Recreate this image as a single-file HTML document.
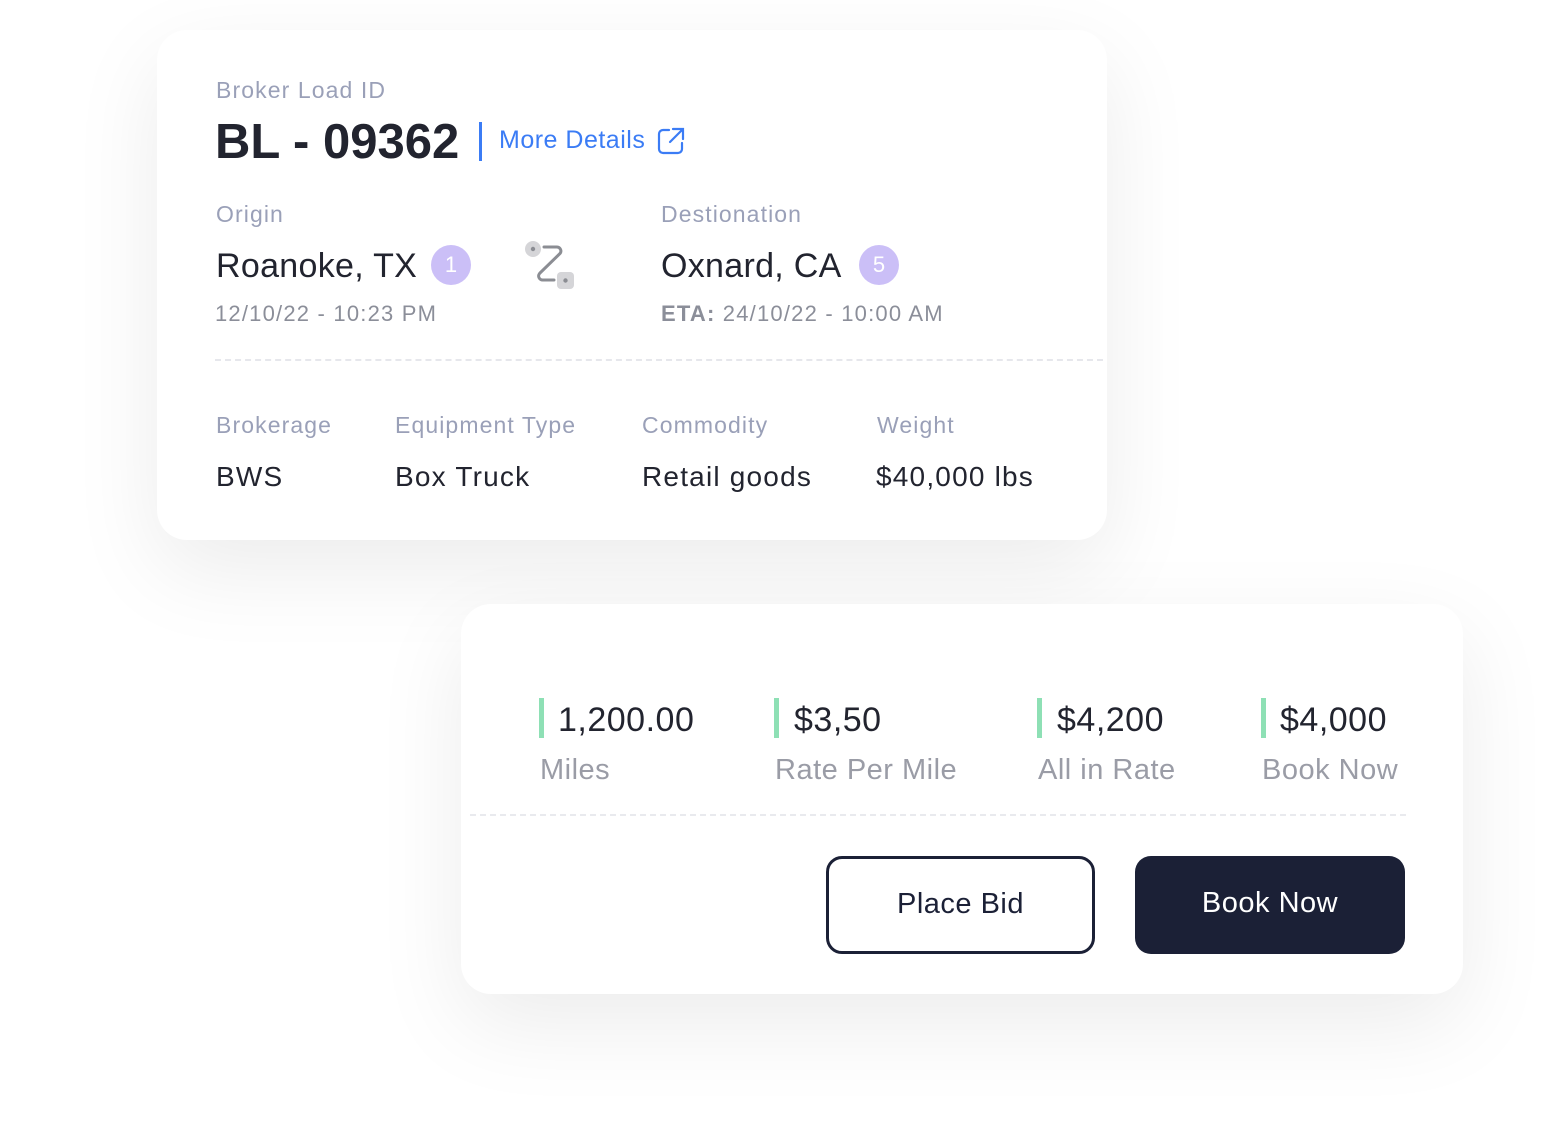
<!DOCTYPE html>
<html><head><style>
*{margin:0;padding:0;box-sizing:border-box}
body{width:1561px;height:1144px;background:#fff;position:relative;overflow:hidden;font-family:"Liberation Sans",sans-serif;color:#22242f}
.card{position:absolute;background:#fff;border-radius:30px;box-shadow:0 30px 90px rgba(0,0,0,0.08)}
.a{position:absolute;white-space:nowrap}
.lbl{color:#9aa0b8;font-size:23px;letter-spacing:1.1px}
.sub{color:#8b8e99;font-size:22px;letter-spacing:1.2px}
.val{font-size:28px;color:#22242f;letter-spacing:1.2px}
.badge{position:absolute;width:40px;height:40px;border-radius:50%;background:#cbbff7;color:#fff;font-size:22px;text-align:center;line-height:40px}
.bar{position:absolute;width:5px;height:40px;background:#8ee0b5}
.big{font-size:34px;color:#22242f;letter-spacing:0.5px}
.gl{font-size:29px;color:#9a9ca6;letter-spacing:0.5px}
</style></head><body>
<div class="card" style="left:157px;top:30px;width:950px;height:510px"></div>
<div class="card" style="left:461px;top:604px;width:1002px;height:390px"></div>

<div class="a lbl" style="left:216px;top:77px">Broker Load ID</div>
<div class="a" style="left:215px;top:114px;font-size:49px;font-weight:bold;color:#22242f">BL - 09362</div>
<div class="a" style="left:479px;top:122px;width:3px;height:39px;background:#3b7cf5"></div>
<div class="a" style="left:499px;top:126px;font-size:25px;color:#3b7cf5;letter-spacing:0.5px">More Details</div>
<svg class="a" style="left:656px;top:126px" width="30" height="30" viewBox="0 0 30 30" fill="none" stroke="#3b7cf5" stroke-width="2.2" stroke-linecap="round"><path d="M13 4H7a4 4 0 0 0-4 4v15a4 4 0 0 0 4 4h15a4 4 0 0 0 4-4v-6"/><path d="M17 3h10v10M27 3L14 16"/></svg>

<div class="a lbl" style="left:216px;top:201px">Origin</div>
<div class="a" style="left:216px;top:247px;font-size:34px;letter-spacing:0.3px">Roanoke, TX</div>
<div class="badge" style="left:431px;top:245px">1</div>
<div class="a sub" style="left:215px;top:301px">12/10/22 - 10:23 PM</div>
<svg class="a" style="left:524px;top:240px" width="52" height="52" viewBox="0 0 52 52"><circle cx="9" cy="9" r="8" fill="#d5d5d8"/><circle cx="9" cy="9" r="2.2" fill="#8b8d93"/><rect x="33" y="32" width="17" height="17" rx="4" fill="#d5d5d8"/><circle cx="41.5" cy="40.5" r="2.2" fill="#8b8d93"/><path d="M20 7h13a4 4 0 0 1 3 6.5L16 33a4 4 0 0 0 3 7h11" fill="none" stroke="#8b8d93" stroke-width="3" stroke-linecap="round"/></svg>

<div class="a lbl" style="left:661px;top:201px">Destionation</div>
<div class="a" style="left:661px;top:247px;font-size:34px;letter-spacing:0.3px">Oxnard, CA</div>
<div class="badge" style="left:859px;top:245px">5</div>
<div class="a sub" style="left:661px;top:301px"><b style="font-weight:bold">ETA:</b> 24/10/22 - 10:00 AM</div>

<div class="a" style="left:215px;top:359px;width:888px;border-top:2px dashed #e6e7ec"></div>

<div class="a lbl" style="left:216px;top:412px">Brokerage</div>
<div class="a lbl" style="left:395px;top:412px">Equipment Type</div>
<div class="a lbl" style="left:642px;top:412px">Commodity</div>
<div class="a lbl" style="left:877px;top:412px">Weight</div>
<div class="a val" style="left:216px;top:461px">BWS</div>
<div class="a val" style="left:395px;top:461px">Box Truck</div>
<div class="a val" style="left:642px;top:461px">Retail goods</div>
<div class="a val" style="left:876px;top:461px">$40,000 lbs</div>

<div class="bar" style="left:539px;top:698px"></div>
<div class="a big" style="left:558px;top:701px">1,200.00</div>
<div class="a gl" style="left:540px;top:754px">Miles</div>
<div class="bar" style="left:774px;top:698px"></div>
<div class="a big" style="left:794px;top:701px">$3,50</div>
<div class="a gl" style="left:775px;top:754px">Rate Per Mile</div>
<div class="bar" style="left:1037px;top:698px"></div>
<div class="a big" style="left:1057px;top:701px">$4,200</div>
<div class="a gl" style="left:1038px;top:754px">All in Rate</div>
<div class="bar" style="left:1261px;top:698px"></div>
<div class="a big" style="left:1280px;top:701px">$4,000</div>
<div class="a gl" style="left:1262px;top:754px">Book Now</div>

<div class="a" style="left:470px;top:814px;width:936px;border-top:2px dashed #e9eaee"></div>

<div class="a" style="left:826px;top:856px;width:269px;height:98px;border:3px solid #1b2036;border-radius:16px;text-align:center;line-height:90px;font-size:29px;color:#1b2036;letter-spacing:0.5px">Place Bid</div>
<div class="a" style="left:1135px;top:856px;width:270px;height:98px;background:#1b2036;border-radius:16px;text-align:center;line-height:94px;font-size:29px;color:#fff;letter-spacing:0.5px">Book Now</div>
</body></html>
